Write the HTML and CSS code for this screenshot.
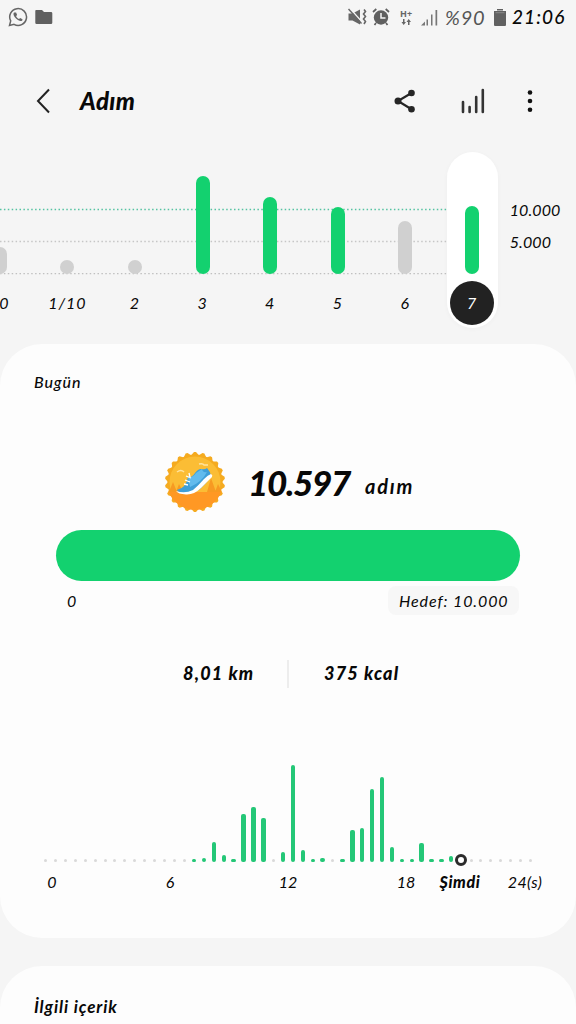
FILE: index.html
```html
<!DOCTYPE html>
<html lang="tr">
<head>
    <meta charset="UTF-8">
    <meta name="viewport" content="width=device-width, initial-scale=1">
    <title>Adım</title>
    <link rel="stylesheet" href="styles.css">
</head>
<body>
    <div class="status-bar">
        <div class="status-left">
            <svg width="20" height="20" viewBox="0 0 20 20" fill="none" stroke="#666" stroke-width="1.5">
                <path d="M1.5 18.5l1.2-4.6A8.4 8.4 0 1 1 6 17.3z"/>
                <path d="M6 5.6c-1.2 1.3-.4 3.6 2 6s5 3.200 6.300 1.800l.2-1.200-2.300-1.200-1.200 1C9.600 11.400 8.500 10.200 8.100 9l1-1.100-1-2.500z" fill="#666" stroke="none"/>
            </svg>
            <svg width="18" height="16" viewBox="0 0 18 16">
                <path d="M1 1h6l2 2h7q1.300 0 1.300 1.300v9.400q0 1.300-1.300 1.300H1.500Q.3 15 .3 13.700V2Q.3 1 1 1z" fill="#606060"/>
            </svg>
        </div>
        <div class="status-right">
            <svg class="mute" width="19" height="18" viewBox="0 0 19 18">
                <path d="M.5 5.500h4L12 1.500v15l-7.500-4h-4z" fill="#666"/>
                <path d="M1.500 0l12.500 14" stroke="#f5f5f5" stroke-width="1.500"/>
                <path d="M.5 1l13 14.500" stroke="#666" stroke-width="1.500"/>
                <path d="M16 1.500l1.500 2-2 2.500 2 2.500-2 2.500 2 2.500-1.500 2.500" fill="none" stroke="#666" stroke-width="1.600"/>
            </svg>
            <svg class="alarm" width="18" height="18" viewBox="0 0 18 18">
                <circle cx="9" cy="9.500" r="7.200" fill="#606060"/>
                <path d="M1 4l3.300-3M17 4l-3.300-3M4 15l-1.500 2M14 15l1.500 2" stroke="#606060" stroke-width="1.700"/>
                <path d="M9 5v5h4.500" fill="none" stroke="#f5f5f5" stroke-width="1.500"/>
            </svg>
            <div class="network">
                <span>H+</span>
                <svg width="10" height="6" viewBox="0 0 10 6" fill="#666">
                    <path d="M2 0h1.500v3H5L2.700 6 .5 3H2zM7 6h1.500V3H10L7.700 0 5.500 3H7z"/>
                </svg>
            </div>
            <svg class="signal" width="17" height="17" viewBox="0 0 17 17" fill="#777">
                <path d="M0 16.500L4 12.500v4zM5.500 10.500h1.500v6H5.500zM10 5.500h1.500v11H10zM14.500 1h1.700v15.500h-1.700z"/>
            </svg>
            <span class="percent">%90</span>
            <svg class="battery" width="12" height="17" viewBox="0 0 12 17">
                <path d="M3 0h6v1.500H3zM0 2h12v14q0 1-1 1H1q-1 0-1-1z" fill="#606060"/>
                <path d="M1.500 3.700h9" stroke="#888" stroke-width="1"/>
            </svg>
            <span class="clock">21:06</span>
        </div>
    </div>

    <header class="app-bar">
        <svg class="back" width="16" height="28" viewBox="0 0 16 28">
            <path d="M14 2.500L3 14l11 11.500" fill="none" stroke="#222" stroke-width="2"/>
        </svg>
        <h1>Adım</h1>
        <svg class="share" width="22" height="24" viewBox="0 0 22 24" fill="#252525">
            <path d="M17.500 4L4 12l13.500 8.200" fill="none" stroke="#252525" stroke-width="2.200"/>
            <circle cx="17.500" cy="4" r="3.300"/>
            <circle cx="4" cy="12" r="3.500"/>
            <circle cx="17.500" cy="20.200" r="3.300"/>
        </svg>
        <svg class="trends" width="24" height="26" viewBox="0 0 24 26" stroke="#333" stroke-width="2.600" stroke-linecap="round">
            <path d="M2 14v10M8.600 19v5M15.200 9v15M21.800 2v22"/>
        </svg>
        <svg class="more" width="6" height="22" viewBox="0 0 6 22" fill="#111">
            <circle cx="3" cy="2.500" r="2.300"/>
            <circle cx="3" cy="11" r="2.300"/>
            <circle cx="3" cy="19.700" r="2.300"/>
        </svg>
    </header>

    <section class="days">
        <svg class="grid-lines" width="450" height="70" viewBox="0 0 450 70" stroke-width="1.300" stroke-dasharray="1.500 2.400">
            <path d="M0 3.500h450" stroke="#55c3a2"/>
            <path d="M0 35.500h450" stroke="#c6c6c6"/>
            <path d="M0 67.700h450" stroke="#c0c0c0"/>
        </svg>
        <div class="day-list" id="days"></div>
        <div class="scale">
            <span class="scale-top">10.000</span>
            <span class="scale-mid">5.000</span>
        </div>
    </section>

    <main class="card today">
        <h2>Bugün</h2>
        <div class="total">
            <svg class="badge" width="62" height="62" viewBox="-31 -31 62 62">
                <defs>
                    <clipPath id="disc"><circle r="28"/></clipPath>
                </defs>
                <g fill="#f5ab20" id="teeth"></g>
                <circle r="27.500" fill="#f5ab20"/>
                <g clip-path="url(#disc)">
                    <circle r="25.500" fill="#fbbd35"/>
                    <path d="M-30 10h60v22h-60z" fill="#ff9824"/>
                    <path d="M-26 10l4-10 4 10zM-19 10l3-8 4 8zM12 10l4-14 5 14zM20 10l3-8 4 8z" fill="#f79a22"/>
                </g>
                <path d="M-18-10q4-3 7 0M4-18q4-1 5 1h4" fill="none" stroke="#ffe3a0" stroke-width="1.500"/>
                <path d="M-18 8Q-9 6-7-5q4 1 7-4 3-4 6-4 4 1 6-1 3 3 4 8Q11 2 5 7-1 12-10 11-17 11-18 8z" fill="#3f9fd8"/>
                <path d="M-7-5q5 1 8-4l6-4q1 4 5 3Q7 0-5 5z" fill="#62bbed"/>
                <path d="M-19 9q9 3 17-1Q3 4 9-3q4-4 7-5 2 1 1 3Q12 0 6 6-1 13-9 12.500-17 12-19 9z" fill="#fff"/>
                <path d="M-9-6l5 2M-10-2l5 2M-6-9l1 4M-11 2l4 1" stroke="#fff" stroke-width="1.300"/>
            </svg>
            <span class="count">10.597</span>
            <span class="unit">adım</span>
        </div>
        <div class="progress"></div>
        <div class="progress-labels">
            <span class="zero">0</span>
            <span class="goal">Hedef: 10.000</span>
        </div>
        <div class="stats">
            <span class="km">8,01 km</span>
            <span class="divider"></span>
            <span class="kcal">375 kcal</span>
        </div>
        <div class="hours" id="hours"></div>
        <div class="hour-labels">
            <span>0</span>
            <span>6</span>
            <span>12</span>
            <span>18</span>
            <span class="now-label">Şimdi</span>
            <span class="end-label">24(s)</span>
        </div>
    </main>

    <section class="card related">
        <h2>İlgili içerik</h2>
    </section>

    <script>
        // [label, bar height, goal reached]
        const days = [
            ['0', 27, false], ['1/10', 14, false], ['2', 14, false], ['3', 98, true],
            ['4', 77, true], ['5', 67, true], ['6', 53, false], ['7', 68, true]
        ];
        document.getElementById('days').innerHTML = days.map(([label, h, done], i) =>
            `<div class="day${i === 7 ? ' selected' : ''}">
                <div class="day-bar${done ? ' done' : ''}" style="height:${h}px"></div>
                <span class="day-label">${label}</span>
            </div>`).join('');

        // half-hour slots, 0 = no steps
        const slots = new Array(50).fill(0);
        const walked = [3, 4.5, 20.5, 7, 3, 48.5, 55.5, 44, 0, 10, 97, 12, 3, 4, 0,
            3, 32.5, 34.5, 73, 85, 15, 3, 3, 19, 3, 3, 6.5];
        walked.forEach((h, i) => slots[15 + i] = h);
        document.getElementById('hours').innerHTML = slots.map((h, i) => {
            if (i === 42) return '<div class="slot"><i class="now"></i></div>';
            if (!h) return '<div class="slot"><i class="empty"></i></div>';
            return `<div class="slot"><i class="steps" style="height:${h}px"></i></div>`;
        }).join('');

        // scalloped edge of the badge
        let teeth = '';
        for (let i = 0; i < 22; i++) {
            teeth += `<path d="M-4.500-26L-1-30h2l3.500 4z" transform="rotate(${i * 360 / 22})"/>`;
        }
        document.getElementById('teeth').innerHTML = teeth;
    </script>
</body>
</html>
```
FILE: styles.css
```css
* {
    box-sizing: border-box;
}

body {
    margin: 0;
    width: 576px;
    height: 1024px;
    overflow: hidden;
    background: #f5f5f5;
    color: #080808;
    font-family: Lato, "Open Sans", sans-serif;
    font-style: italic;
    font-size: 16px;
    line-height: 20px;
}

h1, h2 {
    margin: 0;
}

svg {
    display: block;
    flex: none;
}

span {
    white-space: nowrap;
}

/* status bar */
.status-bar {
    display: flex;
    justify-content: space-between;
    height: 34px;
    padding: 0 12px 0 8px;
}

.status-left, .status-right {
    display: flex;
    align-items: center;
}

.status-left {
    gap: 7px;
}

.mute {
    margin-right: 5px;
}

.alarm {
    margin-right: 10px;
}

.network {
    width: 14px;
    margin-right: 7px;
    color: #666;
    font: bold 9px/9px "Open Sans", sans-serif;
}

.network svg {
    margin: 1px 0 0 1px;
}

.signal {
    margin-right: 7px;
}

.percent {
    width: 42px;
    color: #555;
    font-size: 20px;
    letter-spacing: 0.8px;
}

.battery {
    margin: 0 6px 0 7px;
}

.clock {
    width: 52px;
    font-size: 19px;
    font-weight: 500;
    letter-spacing: 1.1px;
}

/* app bar */
.app-bar {
    display: flex;
    align-items: center;
    height: 116px;
    margin-top: 9px;
    padding: 0 43px 0 35px;
}

.back {
    margin-right: 29px;
}

h1 {
    flex: 1;
    font-size: 24px;
    font-weight: 900;
    line-height: 30px;
    letter-spacing: 0.4px;
}

.share {
    margin-right: 45px;
}

.trends {
    margin-right: 42px;
}

/* days chart */
.days {
    position: relative;
    display: flex;
    height: 192px;
    margin-top: -7px;
}

.grid-lines {
    position: absolute;
    left: 0;
    top: 54px;
}

.day-list {
    position: relative;
    display: flex;
    flex: none;
    height: 176px;
    margin-left: -34px;
}

.day {
    display: flex;
    flex-direction: column;
    align-items: center;
    justify-content: flex-end;
    width: 67.6px;
    height: 173px;
}

.day-bar {
    width: 14px;
    border-radius: 7px;
    background: #d0d0d0;
}

.day-bar.done {
    background: #13d16f;
}

.day-label {
    height: 44px;
    margin-top: 7px;
    line-height: 44px;
    letter-spacing: 1px;
}

.day:first-child .day-label {
    padding-left: 9px;
}

.selected {
    width: 51px;
    height: 176px;
    margin-left: 7.5px;
    padding-bottom: 3px;
    border-radius: 26px;
    background: #fff;
    box-shadow: 0 1px 5px rgba(0, 0, 0, 0.03);
}

.selected .day-label {
    width: 44px;
    border-radius: 50%;
    background: #222;
    color: #fff;
    text-align: center;
}

.scale {
    display: flex;
    flex-direction: column;
    gap: 12px;
    padding: 48px 0 0 12px;
    letter-spacing: 0.1px;
}

/* cards */
.card {
    background: #fdfdfd;
    border-radius: 42px;
}

.card h2 {
    padding-left: 34px;
    font-size: 17px;
    letter-spacing: 0.9px;
}

.today {
    height: 594px;
    padding-top: 28px;
}

.card.today h2 {
    font-size: 16px;
    font-weight: 500;
}

.total {
    display: flex;
    align-items: center;
    height: 62px;
    margin: 59px 0 0 164px;
}

.count {
    width: 102px;
    margin-left: 22px;
    font-size: 35px;
    font-weight: 900;
    line-height: 40px;
    letter-spacing: -1.3px;
}

.unit {
    margin: 7px 0 0 15px;
    font-size: 20px;
    font-weight: bold;
    letter-spacing: 1.8px;
}

.progress {
    width: 464px;
    height: 51px;
    margin: 17px 0 0 56px;
    border-radius: 26px;
    background: #13d16f;
}

.progress-labels {
    display: flex;
    justify-content: space-between;
    margin: 5px 57px 0 67px;
    line-height: 29px;
}

.goal {
    width: 131px;
    padding-left: 11px;
    border-radius: 8px;
    background: #f7f7f7;
    letter-spacing: 0.9px;
}

.stats {
    display: flex;
    align-items: center;
    height: 30px;
    margin: 44px 0 0 183px;
    font-size: 18px;
    font-weight: 900;
    letter-spacing: 1.2px;
}

.stats > span:not(.divider) {
    margin-top: -2px;
}

.km {
    width: 104px;
}

.divider {
    width: 2px;
    height: 28px;
    margin-right: 35px;
    background: #ededed;
}

.hours {
    display: flex;
    align-items: flex-end;
    height: 110px;
    margin: 63px 0 0 40.8px;
}

.slot {
    display: flex;
    justify-content: center;
    flex: none;
    width: 9.9px;
}

.slot i {
    flex: none;
}

.steps {
    width: 4.4px;
    border-radius: 2px;
    background: #24c777;
}

.empty {
    width: 3px;
    height: 3px;
    border-radius: 50%;
    background: #d9d9d9;
}

.now {
    width: 12px;
    height: 12px;
    margin-bottom: -4px;
    border: 3px solid #2b2b2b;
    border-radius: 50%;
    background: #fff;
}

.hour-labels {
    display: grid;
    grid-template-columns: 118px 118px 118px 118px;
    grid-auto-columns: 0;
    grid-auto-flow: column;
    align-items: center;
    justify-items: center;
    height: 40px;
    margin-left: -7px;
}

.now-label {
    margin-left: -10px;
    font-weight: 900;
    letter-spacing: 0.6px;
}

.end-label {
    margin-left: 120px;
    letter-spacing: 0.3px;
}

.related {
    height: 58px;
    margin-top: 28px;
    padding-top: 31px;
    border-radius: 42px 42px 0 0;
}
```
